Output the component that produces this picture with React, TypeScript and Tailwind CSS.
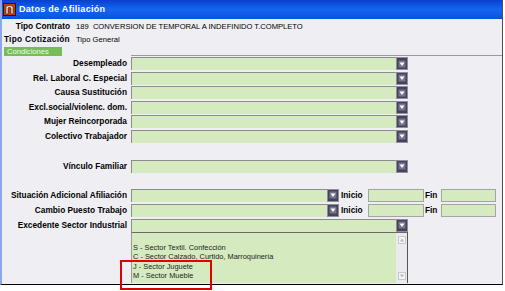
import React from "react";

const FONT = { fontFamily: '"Liberation Sans", Arial, sans-serif' };

function DropBtn() {
  return (
    <div className="w-[12px] h-[13px] bg-[#45435a] border border-[#8f8da0] flex items-center justify-center shrink-0">
      <svg width="8" height="8" viewBox="0 0 8 8">
        <rect x="0.5" y="0.5" width="7" height="7" fill="#77758c" />
        <path d="M1.5 2.5 L6.5 2.5 L4 6 Z" fill="#ffffff" />
      </svg>
    </div>
  );
}

function Combo({ width }: { width: string }) {
  return (
    <div className="flex h-[13px]">
      <div className={`${width} h-full bg-[#d5ebbf] border-t border-l border-[#8c8c8c]`} />
      <DropBtn />
    </div>
  );
}

function Label({ children }: { children: React.ReactNode }) {
  return (
    <div className="w-[125px] text-right whitespace-nowrap font-bold text-[8.3px] leading-[13px] text-black">
      {children}
    </div>
  );
}

function ComboRow({ label }: { label: string }) {
  return (
    <div className="flex items-center h-[13px]">
      <Label>{label}</Label>
      <div className="ml-[4px]">
        <Combo width="w-[265px]" />
      </div>
    </div>
  );
}

function DateRow({ label }: { label: string }) {
  return (
    <div className="flex items-center h-[13px]">
      <Label>{label}</Label>
      <div className="ml-[4px] flex items-center h-[13px]">
        <Combo width="w-[196px]" />
        <div className="w-[29px] pl-[2px] font-bold text-[8.3px] leading-[13px]">Inicio</div>
        <div className="w-[56px] h-[13px] bg-[#d5ebbf] border border-[#a4a4a4]" />
        <div className="w-[17px] pl-[1px] font-bold text-[8.3px] leading-[13px]">Fin</div>
        <div className="w-[55px] h-[13px] bg-[#d5ebbf] border border-[#a4a4a4]" />
      </div>
    </div>
  );
}

export default function App() {
  return (
    <div className="relative w-[505px] h-[291px] bg-white overflow-hidden" style={FONT}>
      <div className="w-[503px] h-[285px] flex flex-col border-l-2 border-[#8aa8e6] border-r border-r-[#505050] border-b border-b-black bg-[#efeff3]">
        {/* Title bar */}
        <div className="h-[19px] flex items-center bg-gradient-to-b from-[#0a3fd0] via-[#1466f2] to-[#0a52e0] shrink-0">
          <svg width="13" height="13" viewBox="0 0 13 13" className="ml-[1px]">
            <rect x="0.5" y="0.5" width="12" height="12" fill="#c0400e" stroke="#3a1000" />
            <path d="M3 11 V4.5 Q3 2.5 6.5 2.5 Q10 2.5 10 4.5 V11 H8 V5 Q8 4.3 6.5 4.3 Q5 4.3 5 5 V11 Z" fill="#fff6e8" stroke="#3a1000" strokeWidth="0.6" />
          </svg>
          <div className="ml-[3px] text-white font-bold text-[9px] tracking-[0.3px]">Datos de Afiliación</div>
        </div>

        {/* Header info */}
        <div className="flex items-center h-[13px] mt-[1px]">
          <div className="w-[68px] text-right font-bold text-[8.3px] whitespace-nowrap">Tipo Contrato</div>
          <div className="ml-[6px] text-[7.6px] whitespace-nowrap">189&nbsp;&nbsp;CONVERSION DE TEMPORAL A INDEFINIDO T.COMPLETO</div>
        </div>
        <div className="flex items-center h-[13px]">
          <div className="w-[68px] text-right font-bold text-[8.3px] whitespace-nowrap tracking-[0.3px]">Tipo Cotización</div>
          <div className="ml-[6px] text-[7.6px] whitespace-nowrap">Tipo General</div>
        </div>

        {/* Tab */}
        <div className="flex items-end h-[10px]">
          <div className="ml-[2px] w-[58px] h-[9px] bg-[#76bd5a] text-[#eefbe6] text-[7.6px] leading-[9px] pl-[3px]">Condiciones</div>
          <div className="ml-[69px] flex-1 h-[1px] bg-[#9a9a9a]" />
        </div>

        {/* Condition rows */}
        <div className="flex flex-col gap-[1.6px] mt-[1px]">
          <ComboRow label="Desempleado" />
          <ComboRow label="Rel. Laboral C. Especial" />
          <ComboRow label="Causa Sustitución" />
          <ComboRow label="Excl.social/violenc. dom." />
          <ComboRow label="Mujer Reincorporada" />
          <ComboRow label="Colectivo Trabajador" />
        </div>

        <div className="mt-[17px]">
          <ComboRow label="Vínculo Familiar" />
        </div>

        <div className="mt-[16px] flex flex-col gap-[2px]">
          <DateRow label="Situación Adicional Afiliación" />
          <DateRow label="Cambio Puesto Trabajo " />
          <ComboRow label="Excedente Sector Industrial" />
        </div>

        {/* List box */}
        <div className="flex">
          <div className="w-[129px]" />
          <div className="w-[277px] h-[51px] flex bg-[#d5ebbf] border-t border-t-[#6a6a6a] border-l border-l-[#9a9a9a] border-r border-r-[#555]">
            <div className="flex-1 pt-[10px] pl-[1px] text-[7.4px] leading-[9.3px] text-[#222] whitespace-nowrap">
              <div>S - Sector Textil. Confección</div>
              <div>C - Sector Calzado, Curtido, Marroquinería</div>
              <div>J - Sector Juguete</div>
              <div>M - Sector Mueble</div>
            </div>
            <div className="w-[11px] h-full bg-[#ebebef] flex flex-col items-center justify-between py-[3px]">
              <svg width="8" height="8" viewBox="0 0 8 8">
                <rect x="0.5" y="0.5" width="7" height="7" fill="#f4f4f6" stroke="#c8c8cc" />
                <path d="M2 5.5 L6 5.5 L4 2.5 Z" fill="#b8b8bc" />
              </svg>
              <svg width="8" height="8" viewBox="0 0 8 8">
                <rect x="0.5" y="0.5" width="7" height="7" fill="#f4f4f6" stroke="#c8c8cc" />
                <path d="M2 2.5 L6 2.5 L4 5.5 Z" fill="#b8b8bc" />
              </svg>
            </div>
          </div>
        </div>
      </div>

      {/* Red annotation box */}
      <div className="absolute left-[120px] top-[260px] w-[92px] h-[30px] border-2 border-[#e00000]" />
    </div>
  );
}
